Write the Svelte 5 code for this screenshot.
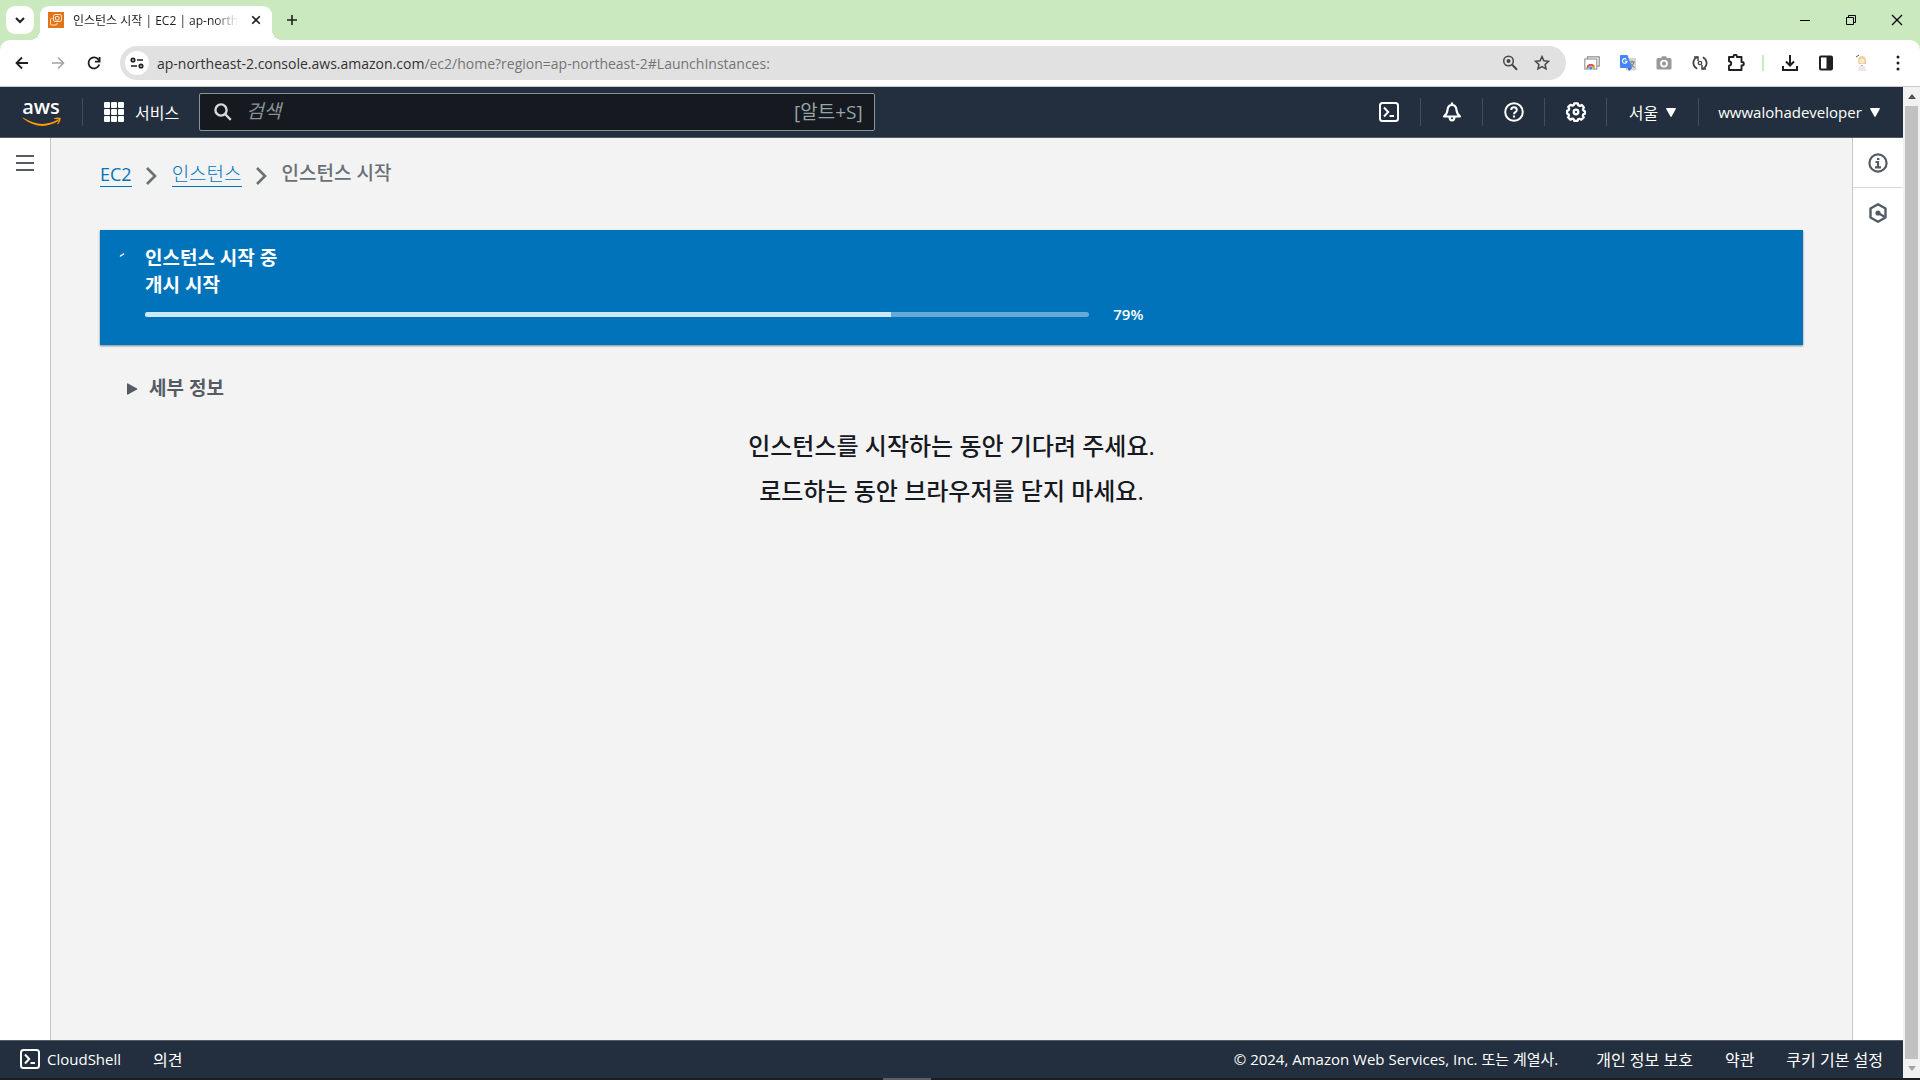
<script lang="ts">
  const progress = 79;

  const url = {
    host: 'ap-northeast-2.console.aws.amazon.com',
    path: '/ec2/home?region=ap-northeast-2#LaunchInstances:'
  };

  const footerLinks = ['개인 정보 보호', '약관', '쿠키 기본 설정'];
</script>

<svelte:head>
  <title>인스턴스 시작 | EC2 | ap-northeast-2</title>
</svelte:head>

{#snippet terminal()}
  <svg width="20" height="20" viewBox="0 0 20 20" fill="none" stroke="currentColor" stroke-width="2">
    <rect x="1" y="1" width="18" height="18" rx="2.5" />
    <path d="M5 5.5 9.2 10 5 14.5M10.5 14h4.5" />
  </svg>
{/snippet}

{#snippet caret()}
  <svg width="10" height="9" viewBox="0 0 10 9" fill="currentColor"><path d="M.8 0h8.4q1 0 .6.9L5.6 8.5q-.6.8-1.2 0L.2.9Q-.2 0 .8 0z" /></svg>
{/snippet}

{#snippet chevron()}
  <svg width="11" height="18" viewBox="0 0 11 18" fill="none" stroke="currentColor" stroke-width="2.6"><path d="M1 1l8 8-8 8" /></svg>
{/snippet}

<div class="window">
  <!-- Tab strip -->
  <header class="tabs">
    <button class="tabs__search" aria-label="탭 검색">
      <svg width="12" height="12" viewBox="0 0 12 12" fill="none" stroke="currentColor" stroke-width="2"><path d="M2 4l4 4 4-4" /></svg>
    </button>
    <div class="tab">
      <svg width="16" height="16" viewBox="0 0 16 16">
        <rect width="16" height="16" fill="#e27418" />
        <g fill="none" stroke="#fbe3cf" stroke-width="1">
          <rect x="5.5" y="2.5" width="8" height="7" rx="1.5" />
          <rect x="7.5" y="4.5" width="3.5" height="3.5" rx=".5" />
          <path d="M4.5 6.5H3.5q-1 0-1 1V12q0 1 1 1H8q1 0 1-1v-1" />
        </g>
      </svg>
      <span class="tab__title">인스턴스 시작 | EC2 | ap-northeast-2</span>
      <button class="tab__close" aria-label="탭 닫기">
        <svg width="10" height="10" viewBox="0 0 10 10" stroke="currentColor" stroke-width="1.6"><path d="M1.2 1.2l7.6 7.6M8.8 1.2L1.2 8.8" /></svg>
      </button>
    </div>
    <button class="tabs__new" aria-label="새 탭">
      <svg width="12" height="12" viewBox="0 0 12 12" stroke="currentColor" stroke-width="1.6"><path d="M6 1v10M1 6h10" /></svg>
    </button>
    <div class="tabs__controls">
      <button aria-label="최소화"><svg width="10" height="10" viewBox="0 0 10 10" stroke="currentColor"><path d="M0 5.5h10" /></svg></button>
      <button aria-label="이전 크기로 복원"><svg width="10" height="10" viewBox="0 0 10 10" fill="none" stroke="currentColor"><path d="M.5 2.5h7v7h-7zM2.5 2.5v-2h7v7h-2" /></svg></button>
      <button aria-label="닫기"><svg width="12" height="12" viewBox="0 0 12 12" stroke="currentColor" stroke-width="1.2"><path d="M1 1l10 10M11 1L1 11" /></svg></button>
    </div>
  </header>

  <!-- Toolbar -->
  <div class="toolbar-wrap">
    <div class="toolbar">
      <div class="toolbar__nav">
        <button aria-label="뒤로"><svg width="14" height="14" viewBox="0 0 14 14" fill="none" stroke="currentColor" stroke-width="1.8"><path d="M13 7H2M7 1.5L1.5 7 7 12.5" /></svg></button>
        <button aria-label="앞으로" disabled><svg width="14" height="14" viewBox="0 0 14 14" fill="none" stroke="currentColor" stroke-width="1.6"><path d="M1 7h11M7 1.5L12.5 7 7 12.5" /></svg></button>
        <button aria-label="새로고침"><svg width="14" height="14" viewBox="0 0 14 14" fill="none" stroke="currentColor" stroke-width="1.8"><path d="M12.3 8.5A5.5 5.5 0 1 1 11.5 3.7L12.5 5M12.6 1v4.6H8" /></svg></button>
      </div>
      <div class="omnibox">
        <button class="omnibox__site" aria-label="사이트 정보 보기">
          <svg width="14" height="12" viewBox="0 0 14 12" fill="none" stroke="currentColor" stroke-width="1.7"><circle cx="3" cy="3" r="1.7" /><path d="M7 3h6M1 9h6" /><circle cx="11" cy="9" r="1.7" /></svg>
        </button>
        <span class="omnibox__url">{url.host}<span>{url.path}</span></span>
        <button aria-label="확대/축소">
          <svg width="16" height="16" viewBox="0 0 16 16" fill="none" stroke="currentColor" stroke-width="1.5"><circle cx="6.5" cy="6" r="4.8" /><path d="M10 9.5l5 5.2" stroke-width="2" /><circle cx="6.5" cy="6" r="2" fill="currentColor" stroke="none" /></svg>
        </button>
        <button aria-label="북마크에 추가">
          <svg width="16" height="16" viewBox="0 0 16 16" fill="none" stroke="currentColor" stroke-width="1.5"><path d="M8 1.6l1.9 4.2 4.6.5-3.4 3.1.9 4.5L8 11.6l-4 2.3.9-4.5L1.5 6.3l4.6-.5z" /></svg>
        </button>
      </div>
      <div class="extensions">
        <button aria-label="Chrome 확장">
          <svg width="16" height="14" viewBox="0 0 16 14" fill="none"><path d="M3.5 3V.8h11.7v9.4H13" stroke="#8d8d8d" stroke-width="1.2" /><rect x=".8" y="3" width="12" height="10" fill="#fff" stroke="#999" stroke-width="1.2" /><path d="M2.5 12.5a4.3 4.3 0 0 1 8.6 0" fill="#34a853" /><path d="M2.6 11.5a4.3 4.3 0 0 1 8.4 0z" fill="#ea4335" /><path d="M9 12.5h2.1q0-2-1.2-3.3z" fill="#fbbc04" /><circle cx="6.8" cy="12" r="2" fill="#4285f4" stroke="#fff" stroke-width=".6" /></svg>
        </button>
        <button aria-label="번역">
          <svg width="16" height="16" viewBox="0 0 16 16"><rect x="6" y="3" width="10" height="12.5" rx="1" fill="#d5d5d5" /><path d="M9 7h6M12 5.5V7M14 7q-1 4-4 5.5M10.5 8q1 3 4 4.5" stroke="#777" fill="none" /><path d="M1 0h6.5L12 13H1q-1 0-1-1V1q0-1 1-1z" fill="#4285f4" /><path d="M7.5 13H12l-3 3z" fill="#3367d6" /><path d="M6.4 4.3A2.3 2.3 0 1 0 7 6.3H4.8" fill="none" stroke="#fff" stroke-width="1.1" /></svg>
        </button>
        <button aria-label="화면 캡처">
          <svg width="16" height="14" viewBox="0 0 16 14"><path d="M2 2h3l1-1.7h4L11 2h3q1.5 0 1.5 1.5v8.5q0 1.5-1.5 1.5H2Q.5 13.5.5 12V3.500Q.5 2 2 2z" fill="#999" /><circle cx="8" cy="7.6" r="3" fill="none" stroke="#fff" stroke-width="1.8" /></svg>
        </button>
        <button aria-label="동기화">
          <svg width="16" height="16" viewBox="0 0 16 16" fill="none" stroke="#444" stroke-width="1.8"><path d="M5.200 13.800A6.400 6.400 0 0 1 3.500 3.200L5.500 2M10.800 2.200a6.400 6.400 0 0 1 1.700 10.600L10.500 14" /><path d="M2 1.900h4v4M14 14.100h-4v-4" stroke-width="1.5" /><circle cx="8" cy="8" r="1.700" stroke-width="1.3" /></svg>
        </button>
        <button aria-label="확장 프로그램">
          <svg width="18" height="18" viewBox="0 0 18 18" fill="none" stroke="currentColor" stroke-width="1.9" stroke-linejoin="round"><path d="M2 3h4.500V2.500a1.700 1.700 0 0 1 3.400 0V3H14.500v5h.6a1.700 1.700 0 0 1 0 3.400H14.500V16H2v-4.300q2.200-.3 2.200-2.200T2 7.300z" /></svg>
        </button>
        <i class="extensions__divider"></i>
        <button aria-label="다운로드">
          <svg width="16" height="16" viewBox="0 0 16 16" fill="none" stroke="currentColor" stroke-width="2"><path d="M8 0v10M4 6.500l4 4 4-4M1 11v4h14v-4" /></svg>
        </button>
        <button aria-label="측면 패널">
          <svg width="16" height="16" viewBox="0 0 16 16"><rect x="2" y="1.5" width="12" height="13" rx="1" fill="none" stroke="currentColor" stroke-width="2" /><path d="M8.500 1H14v14H8.500z" fill="currentColor" /></svg>
        </button>
        <button aria-label="프로필">
          <svg width="16" height="18" viewBox="0 0 16 18"><path d="M2 3l3-2" stroke="#555" /><path d="M4 17q0-6 4-6t4 6z" fill="#f1e6e6" /><path d="M4.500 10Q3 2 8 2t4 8z" fill="#ecd190" /><circle cx="8" cy="7" r="2.500" fill="#fbe8dc" /><path d="M7 11l1 1 1-1" stroke="#e0a8a8" fill="none" /></svg>
        </button>
        <button aria-label="Chrome 맞춤설정">
          <svg width="4" height="16" viewBox="0 0 4 16" fill="currentColor"><circle cx="2" cy="2" r="1.5" /><circle cx="2" cy="8" r="1.5" /><circle cx="2" cy="14" r="1.5" /></svg>
        </button>
      </div>
    </div>
  </div>

  <div class="viewport">
    <div class="console">
      <!-- AWS navigation -->
      <nav class="nav">
        <a class="nav__logo" href="#home" aria-label="AWS">
          <svg width="40" height="34" viewBox="0 0 40 34">
            <text x="19" y="19" text-anchor="middle">aws</text>
            <path d="M1 22.500q18 11.500 34.500 2.300l.9 1.300Q18.500 37 .6 23.300z" fill="#f90" />
            <path d="M32 23.200q4.500-1.300 6.700-.2.400 3.200-2.800 6.500l-.7-.5q1.600-2.800 1.300-4.500-1.600-.7-4.500-.5z" fill="#f90" />
          </svg>
        </a>
        <i class="nav__divider"></i>
        <button class="nav__services">
          <svg width="20" height="20" viewBox="0 0 20 20" fill="currentColor">
            {#each [0, 7, 14] as y}
              {#each [0, 7, 14] as x}
                <rect {x} {y} width="6" height="6" rx="1" />
              {/each}
            {/each}
          </svg>
          서비스
        </button>
        <label class="search">
          <svg width="18" height="18" viewBox="0 0 18 18" fill="none" stroke="#d5dbdb" stroke-width="2.4"><circle cx="7" cy="7" r="5.6" /><path d="M11 11l5.800 5.800" /></svg>
          <input type="search" placeholder="검색" aria-label="검색" />
          <span>[알트+S]</span>
        </label>
        <div class="nav__tools">
          <button aria-label="CloudShell">{@render terminal()}</button>
          <button aria-label="알림">
            <svg width="20" height="20" viewBox="0 0 20 20" fill="none" stroke="currentColor" stroke-width="2.2" stroke-linejoin="round"><path d="M2 14.500q3-2 3.500-6.500Q6 3 10 3t4.500 5q.5 4.500 3.500 6.500zM7.500 15q.3 3.500 2.500 3.500t2.500-3.500M10 .5V3" /></svg>
          </button>
          <button aria-label="도움말">
            <svg width="20" height="20" viewBox="0 0 20 20" fill="none" stroke="currentColor" stroke-width="2"><circle cx="10" cy="10" r="8.8" /><path d="M7.200 8Q7.200 5.300 10 5.300T12.800 8q0 1.200-1.400 2.100T10 12.200" /><path d="M10 13.500v2" stroke-width="2.2" /></svg>
          </button>
          <button aria-label="설정">
            <svg width="20" height="20" viewBox="0 0 20 20" fill="none" stroke="currentColor" stroke-width="2.3" stroke-linejoin="round"><path d="M8.300 1.300h3.400l.6 2 1.500.7 2-1 2.100 2.400-.9 2 .5 1.200 1.500.8v2.200l-1.700.7-.5 1.300.9 1.900-2.400 2.100-1.900-.9-1.300.6-.6 1.500H8.300l-.7-1.700-1.200-.5-2 1-2.200-2.200.8-2-.5-1.200L1 11.400V8.900l1.600-.7.6-1.400-.9-1.900 2.200-2.100 1.900.8 1.300-.5z" /><circle cx="10" cy="10" r="2.3" /></svg>
          </button>
          <button class="nav__region">서울 {@render caret()}</button>
          <button class="nav__user">wwwalohadeveloper {@render caret()}</button>
        </div>
      </nav>

      <div class="body">
        <aside class="side side--left">
          <button aria-label="탐색 창 열기">
            <svg width="18" height="16" viewBox="0 0 18 16" stroke="currentColor" stroke-width="2"><path d="M0 1h18M0 8h18M0 15h18" /></svg>
          </button>
        </aside>

        <main class="main">
          <ol class="breadcrumb">
            <li><a href="#ec2">EC2</a>{@render chevron()}</li>
            <li><a href="#instances">인스턴스</a>{@render chevron()}</li>
            <li>인스턴스 시작</li>
          </ol>

          <section class="flash">
            <svg class="flash__spinner" width="20" height="20" viewBox="0 0 20 20" stroke="#fff" stroke-width="1.5" stroke-linecap="round"><path d="M4.500 8l3-2" /></svg>
            <div class="flash__content">
              <h2 id="launch-title">인스턴스 시작 중</h2>
              <p>개시 시작</p>
              <div class="flash__progress">
                <div class="bar" role="progressbar" aria-labelledby="launch-title" aria-valuenow={progress} aria-valuemin="0" aria-valuemax="100">
                  <div class="bar__fill" style="width: {progress}%"></div>
                </div>
                <span>{progress}%</span>
              </div>
            </div>
          </section>

          <button class="details">
            <svg width="11" height="12" viewBox="0 0 11 12" fill="currentColor"><path d="M0 1.200Q0 0 1 .400l9 5q1 .6 0 1.200l-9 5q-1 .4-1-.8z" /></svg>
            세부 정보
          </button>

          <div class="wait">
            <p>인스턴스를 시작하는 동안 기다려 주세요.</p>
            <p>로드하는 동안 브라우저를 닫지 마세요.</p>
          </div>
        </main>

        <aside class="side side--right">
          <button aria-label="정보">
            <svg width="20" height="20" viewBox="0 0 20 20" fill="none" stroke="currentColor" stroke-width="2.2"><circle cx="10" cy="10" r="8.6" /><path d="M7.500 9H10v5M7 14.300h6M9 6h2.400" /></svg>
          </button>
          <button aria-label="자습서">
            <svg width="20" height="20" viewBox="0 0 20 20" fill="none" stroke="currentColor" stroke-width="2.4" stroke-linejoin="round"><path d="M10 1.200l7.500 4.300v9L10 18.800l-7.500-4.300v-9z" /><circle cx="10" cy="10" r="2.6" fill="currentColor" stroke="none" /><path d="M10 10l6.500 3.700" /></svg>
          </button>
        </aside>
      </div>

      <footer class="footer">
        <button class="footer__shell">{@render terminal()} CloudShell</button>
        <button>의견</button>
        <span class="footer__copy">© 2024, Amazon Web Services, Inc. 또는 계열사.</span>
        {#each footerLinks as link}
          <a href="#legal">{link}</a>
        {/each}
      </footer>
    </div>

    <div class="scrollbar" aria-hidden="true">
      <svg width="8" height="5" viewBox="0 0 8 5" fill="#505050"><path d="M0 5l4-5 4 5z" /></svg>
      <div class="scrollbar__thumb"></div>
      <svg width="8" height="5" viewBox="0 0 8 5" fill="#a3a3a3"><path d="M0 0l4 5 4-5z" /></svg>
    </div>
  </div>

  <div class="taskbar"><i></i></div>
</div>

<style>
  :global(body) {
    margin: 0;
    background: #f3f3f3;
  }

  .window {
    display: flex;
    flex-direction: column;
    min-height: 100vh;
    font-family: "Open Sans", "Noto Sans CJK KR", sans-serif;
    font-size: 16px;
    color: #16191f;
  }

  .window :global(svg) {
    display: block;
    flex-shrink: 0;
  }

  button {
    display: flex;
    align-items: center;
    justify-content: center;
    padding: 0;
    border: 0;
    background: none;
    color: inherit;
    font: inherit;
    white-space: nowrap;
  }

  a {
    color: inherit;
    text-decoration: none;
  }

  /* Tab strip */
  .tabs {
    display: flex;
    height: 40px;
    background: #cbe9be;
    color: #1f1f1f;
  }

  .tabs__search {
    width: 28px;
    height: 28px;
    margin: 6px;
    border-radius: 9px;
    background: #fff;
  }

  .tab {
    position: relative;
    display: flex;
    align-items: center;
    box-sizing: border-box;
    width: 232px;
    height: 34px;
    margin-top: 6px;
    padding: 0 8px 6px;
    border-radius: 9px 9px 0 0;
    background: #fff;
  }

  .tab::before,
  .tab::after {
    content: '';
    position: absolute;
    bottom: 0;
    width: 10px;
    height: 10px;
  }

  .tab::before {
    right: 100%;
    background: radial-gradient(circle at 0 0, transparent 10px, #fff 10px);
  }

  .tab::after {
    left: 100%;
    background: radial-gradient(circle at 100% 0, transparent 10px, #fff 10px);
  }

  .tab__title {
    flex: 1;
    margin-left: 9px;
    padding-top: 2px;
    overflow: hidden;
    font-size: 12px;
    line-height: 20px;
    white-space: nowrap;
    mask-image: linear-gradient(to right, #000 86%, transparent);
  }

  .tab__close {
    width: 16px;
    height: 16px;
    margin-left: 10px;
  }

  .tabs__new {
    width: 40px;
  }

  .tabs__controls {
    display: flex;
    margin-left: auto;
    color: #000;
  }

  .tabs__controls button {
    width: 46px;
  }

  /* Toolbar */
  .toolbar-wrap {
    background: #cbe9be;
  }

  .toolbar {
    display: flex;
    align-items: center;
    height: 46px;
    padding: 0 4px;
    border-bottom: 1px solid #c6c8cb;
    border-radius: 10px 10px 0 0;
    background: #fff;
    color: #1f1f1f;
  }

  .toolbar__nav {
    display: flex;
  }

  .toolbar__nav button {
    width: 36px;
  }

  .toolbar__nav button:disabled {
    color: #a3a3a3;
  }

  .omnibox {
    display: flex;
    align-items: center;
    flex: 1;
    gap: 16px;
    height: 34px;
    margin: 0 8px;
    padding: 0 16px 0 5px;
    border-radius: 17px;
    background: #e1e1e1;
    color: #474747;
  }

  .omnibox__site {
    width: 24px;
    height: 24px;
    border-radius: 50%;
    background: #fff;
    color: #1f1f1f;
  }

  .omnibox__url {
    flex: 1;
    margin-left: -8px;
    font-size: 14px;
    color: #333;
  }

  .omnibox__url span {
    color: #757575;
  }

  .extensions {
    display: flex;
    align-items: center;
  }

  .extensions button {
    width: 36px;
  }

  .extensions__divider {
    width: 2px;
    height: 16px;
    margin: 0 8px;
    background: #cbe9be;
  }

  /* Page frame */
  .viewport {
    display: flex;
    flex: 1;
  }

  .console {
    display: flex;
    flex-direction: column;
    flex: 1;
    min-width: 0;
  }

  .scrollbar {
    display: flex;
    flex-direction: column;
    align-items: center;
    gap: 7px;
    box-sizing: border-box;
    width: 17px;
    padding: 7px 2px;
    background: #f1f1f1;
  }

  .scrollbar__thumb {
    flex: 1;
    align-self: stretch;
    background: #c1c1c1;
  }

  /* AWS navigation */
  .nav {
    display: flex;
    align-items: center;
    height: 50px;
    border-bottom: 1px solid #545b64;
    background: #232f3e;
    color: #fff;
  }

  .nav__logo {
    margin-left: 22px;
  }

  .nav__logo text {
    fill: #fff;
    font-family: "Open Sans", sans-serif;
    font-size: 20px;
    font-weight: 600;
  }

  .nav__divider {
    width: 1px;
    height: 28px;
    margin-left: 20px;
    background: #414d5c;
  }

  .nav__services {
    gap: 11px;
    margin: 0 20px 0 21px;
  }

  .search {
    display: flex;
    align-items: center;
    gap: 14px;
    box-sizing: border-box;
    width: 35.5%;
    height: 38px;
    padding: 0 11px 0 14px;
    border: 1px solid #879596;
    border-radius: 2px;
    background: #16191f;
    color: #95a5a6;
    font-size: 19px;
  }

  .search input {
    flex: 1;
    min-width: 0;
    padding: 0 0 2px;
    border: 0;
    outline: 0;
    background: none;
    color: inherit;
    font: inherit;
  }

  .search input::placeholder {
    color: #879596;
    font-style: italic;
  }

  .search span {
    padding-bottom: 2px;
  }

  .nav__tools {
    display: flex;
    margin-left: auto;
  }

  .nav__tools button {
    gap: 8px;
    width: 62px;
    height: 28px;
    border-left: 1px solid #414d5c;
  }

  .nav__tools button:first-child {
    border-left: 0;
  }

  .nav__tools .nav__region {
    width: 92px;
  }

  .nav__tools .nav__user {
    width: 205px;
    padding-right: 4px;
    font-size: 15px;
    font-weight: 500;
  }

  /* Body */
  .body {
    display: flex;
    flex: 1;
  }

  .side {
    width: 50px;
    background: #fff;
    color: #545b64;
  }

  .side button {
    width: 100%;
    height: 50px;
  }

  .side--left {
    border-right: 1px solid #c4c8cb;
  }

  .side--right {
    border-left: 1px solid #c4c8cb;
  }

  .side--right button:first-child {
    border-bottom: 1px solid #d5dbdb;
  }

  .main {
    flex: 1;
    padding: 22px 49px 40px;
    background: #f3f3f3;
  }

  .breadcrumb {
    display: flex;
    margin: 0;
    padding: 0;
    list-style: none;
    font-size: 19px;
    line-height: 27px;
    font-weight: 500;
    color: #687078;
  }

  .breadcrumb li {
    display: flex;
    align-items: center;
  }

  .breadcrumb :global(svg) {
    margin: 4px 15px 0 14px;
  }

  .breadcrumb a {
    height: 25px;
    border-bottom: 1px solid #0073bb;
    color: #0073bb;
    font-weight: 300;
  }

  .breadcrumb li:first-child a {
    font-size: 18px;
    font-weight: 400;
  }

  .flash {
    display: flex;
    margin-top: 43px;
    padding: 15px 30px 19px 16px;
    background: #0073bb;
    box-shadow: 0 1px 2px rgba(0, 28, 36, 0.5);
    color: #fff;
  }

  .flash__spinner {
    margin-top: 3px;
  }

  .flash__content {
    flex: 1;
    margin-left: 9px;
    font-size: 19px;
    font-weight: 700;
    line-height: 27px;
  }

  .flash__content h2,
  .flash__content p {
    margin: 0;
    font-size: inherit;
  }

  .flash__progress {
    display: flex;
    align-items: center;
    gap: 24px;
    height: 24px;
    margin-top: 3px;
    font-size: 15px;
    font-weight: 600;
  }

  .bar {
    width: 58%;
    height: 5px;
    overflow: hidden;
    border-radius: 3px;
    background: #66abd6;
  }

  .bar__fill {
    height: 100%;
    background: #cce9f7;
  }

  .details {
    gap: 11px;
    margin: 30px 0 0 27px;
    font-size: 19px;
    font-weight: 700;
    line-height: 27px;
    color: #545b64;
  }

  .wait {
    margin-top: 21px;
    text-align: center;
    font-size: 24px;
    line-height: 45px;
    font-weight: 500;
  }

  .wait p {
    margin: 0;
  }

  /* Footer */
  .footer {
    display: flex;
    align-items: center;
    gap: 32px;
    box-sizing: border-box;
    height: 38px;
    padding: 0 20px 2px;
    border-top: 1px solid #545b64;
    background: #232f3e;
    color: #fff;
  }

  .footer__shell {
    gap: 7px;
    font-size: 15px;
  }

  .footer__copy {
    margin-left: auto;
    margin-right: 6px;
    font-size: 15px;
  }

  .taskbar {
    height: 2px;
    background: #1b1e22;
  }

  .taskbar i {
    display: block;
    width: 48px;
    height: 2px;
    margin-left: 46%;
    background: #5c6066;
  }
</style>
